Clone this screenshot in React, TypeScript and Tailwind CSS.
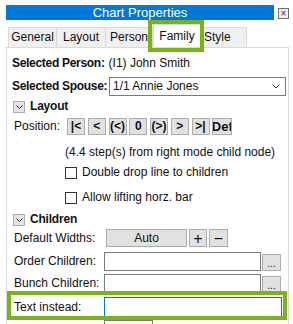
import React from "react";

const Chevron = ({ w = 8, h = 5 }: { w?: number; h?: number }) => (
  <svg width={w} height={h} viewBox="0 0 8 5" fill="none">
    <polyline points="0.5,0.5 4,4 7.5,0.5" stroke="#333" strokeWidth="1" />
  </svg>
);

const Collapse = ({ label }: { label: string }) => (
  <div className="flex items-center h-[13px] pl-[6px]">
    <div className="w-[12px] h-[12px] border border-[#adadad] bg-[#e5e5e5] flex items-center justify-center">
      <svg width="7" height="4" viewBox="0 0 7 4" fill="none">
        <polyline points="0.5,0.5 3.5,3.5 6.5,0.5" stroke="#222" strokeWidth="1" />
      </svg>
    </div>
    <span className="ml-[5px] font-bold leading-[13px] tracking-[-0.2px]">{label}</span>
  </div>
);

const Check = ({ label }: { label: string }) => (
  <div className="flex items-center h-[15px] pl-[58px]">
    <div className="w-[12px] h-[12px] border border-[#333] bg-white" />
    <span className="ml-[5px]">{label}</span>
  </div>
);

const posButtons = ["|<", "<", "(<)", "0", "(>)", ">", ">|"];

const App = () => {
  return (
    <div
      className="relative w-[293px] h-[324px] bg-white overflow-hidden text-[12px] leading-[15px] text-[#111] whitespace-nowrap"
      style={{ fontFamily: '"Liberation Sans", Arial, sans-serif' }}
    >
      {/* title bar */}
      <div className="flex items-start pt-[5px] pl-[6px]">
        <div className="w-[268px] h-[15px] bg-[#0078d7] text-white text-[13px] leading-[15px] text-center">
          Chart Properties
        </div>
        <div className="ml-[4px] mt-[3px] w-[11px] h-[11px] border border-[#707070] bg-[#f0f0f0] flex items-center justify-center text-[10px] leading-[10px] text-[#333]">
          ×
        </div>
      </div>

      {/* tabs */}
      <div className="flex items-end h-[27px] pl-[8px]">
        <div className="w-[49px] h-[20px] border border-b-0 border-[#d9d9d9] bg-[#f0f0f0] flex items-center justify-center">General</div>
        <div className="w-[49px] h-[20px] border border-l-0 border-b-0 border-[#d9d9d9] bg-[#f0f0f0] flex items-center justify-center">Layout</div>
        <div className="w-[47px] h-[20px] border border-l-0 border-b-0 border-[#d9d9d9] bg-[#f0f0f0] flex items-center pl-[4px] overflow-hidden">Person</div>
        <div className="w-[48px] h-[23px] border border-b-0 border-[#d9d9d9] bg-white flex items-center justify-center">Family</div>
        <div className="w-[46px] h-[20px] border border-l-0 border-b-0 border-[#d9d9d9] bg-[#f0f0f0] flex items-center pl-[3px]">Style</div>
      </div>

      {/* panel */}
      <div className="ml-[6px] w-[283px] h-[300px] border border-[#d9d9d9] bg-white">
        <div className="mt-[8px] h-[15px] pl-[5px] flex">
          <span className="font-bold tracking-[-0.3px]">Selected Person:</span>
          <span className="ml-[4px]">(I1) John Smith</span>
        </div>

        <div className="mt-[6px] h-[19px] pl-[5px] flex items-center">
          <span className="w-[97px] shrink-0 font-bold tracking-[-0.3px]">Selected Spouse:</span>
          <div className="w-[177px] shrink-0 h-[19px] border border-[#7a7a7a] bg-white flex items-center justify-between pl-[3px] pr-[5px]">
            <span>1/1 Annie Jones</span>
            <Chevron />
          </div>
        </div>

        <div className="mt-[4px]">
          <Collapse label="Layout" />
        </div>

        <div className="mt-[5px] h-[17px] pl-[7px] flex items-center">
          <span className="w-[53px] shrink-0">Position:</span>
          <div className="flex gap-[2.75px]">
            {posButtons.map((b) => (
              <div
                key={b}
                className="w-[18px] h-[17px] border border-[#adadad] bg-[#e1e1e1] flex items-center justify-center font-bold"
              >
                {b}
              </div>
            ))}
            <div className="w-[20px] h-[17px] border border-[#adadad] bg-[#e1e1e1] flex items-center justify-center font-bold overflow-hidden">
              <span className="text-[13px]">Def</span>
            </div>
          </div>
        </div>

        <div className="mt-[10px] h-[15px] pl-[58px]">(4.4 step(s) from right mode child node)</div>

        <div className="mt-[5px]">
          <Check label="Double drop line to children" />
        </div>
        <div className="mt-[10px]">
          <Check label="Allow lifting horz. bar" />
        </div>

        <div className="mt-[8px]">
          <Collapse label="Children" />
        </div>

        <div className="mt-[3px] h-[18px] pl-[7px] flex items-center">
          <span className="w-[92px] shrink-0">Default Widths:</span>
          <div className="w-[81px] h-[18px] border border-[#adadad] bg-[#e1e1e1] flex items-center justify-center">Auto</div>
          <div className="ml-[2px] w-[18px] h-[18px] border border-[#adadad] bg-[#e1e1e1] flex items-center justify-center text-[16px]">+</div>
          <div className="ml-[2px] w-[19px] h-[18px] border border-[#adadad] bg-[#e1e1e1] flex items-center justify-center text-[16px]">−</div>
        </div>

        <div className="mt-[5px] h-[19px] pl-[7px] flex items-end">
          <span className="w-[90px] shrink-0 self-center">Order Children:</span>
          <div className="w-[157px] h-[19px] border border-[#7a7a7a] bg-white" />
          <div className="ml-[1px] w-[19px] h-[17px] border border-[#adadad] bg-[#e1e1e1] flex items-end justify-center text-[10px] leading-[12px]">...</div>
        </div>

        <div className="mt-[3px] h-[19px] pl-[7px] flex items-end">
          <span className="w-[90px] shrink-0 self-center">Bunch Children:</span>
          <div className="w-[157px] h-[19px] border border-[#7a7a7a] bg-white" />
          <div className="ml-[1px] w-[19px] h-[17px] border border-[#adadad] bg-[#e1e1e1] flex items-end justify-center text-[10px] leading-[12px]">...</div>
        </div>

        <div className="mt-[4px] h-[20px] pl-[7px] flex items-center">
          <span className="w-[90px] shrink-0">Text instead:</span>
          <div className="w-[178px] h-[20px] border border-[#0078d7] bg-white" />
        </div>

        <div className="mt-[3px] h-[19px] pl-[97px] flex">
          <div className="w-[49px] h-[19px] border border-[#7a7a7a] bg-white" />
        </div>
      </div>

      {/* highlights */}
      <div className="absolute left-[148px] top-[20px] w-[56px] h-[32px] border-[4px] border-[#7ab317]" />
      <div className="absolute left-[7px] top-[291px] w-[280px] h-[29px] border-[4px] border-[#7ab317]" />
    </div>
  );
};

export default App;
